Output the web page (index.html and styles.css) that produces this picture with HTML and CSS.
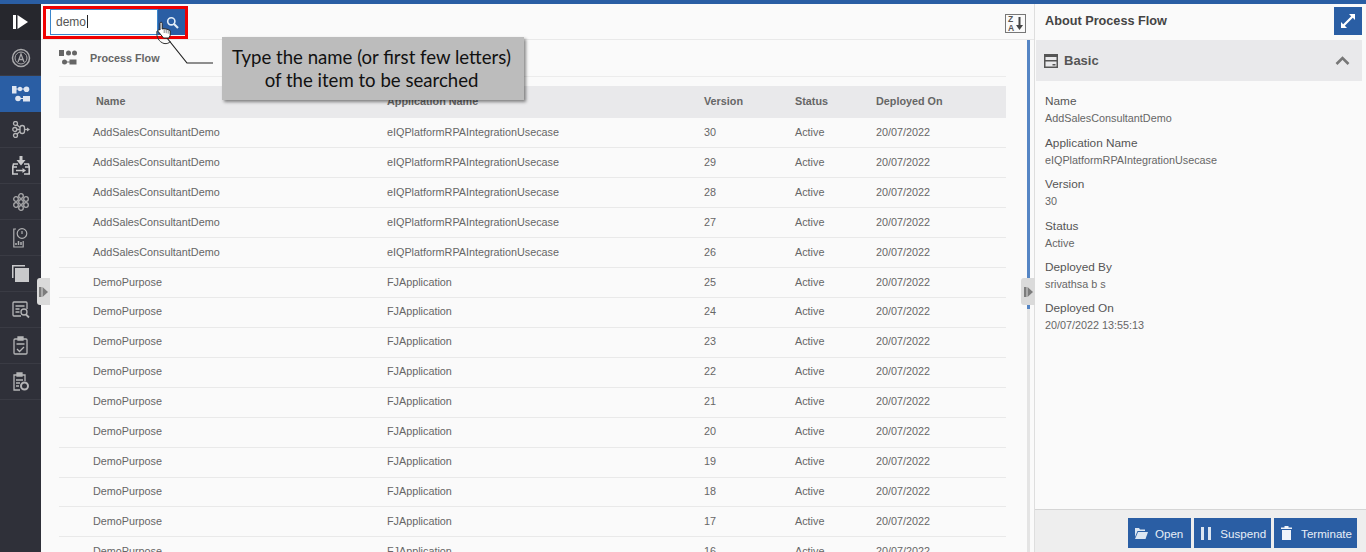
FILE: index.html
```html
<!DOCTYPE html>
<html lang="en">
<head>
    <meta charset="UTF-8">
    <title>Process Flow</title>
    <link rel="stylesheet" href="styles.css">
</head>
<body>
    <div class="top-bar"></div>
    <div class="app">
        <nav class="sidebar">
            <div class="nav-item nav-toggle">
                <svg width="15" height="14" viewBox="0 0 15 14"><rect x="0" y="0" width="3" height="14" fill="#fff"/><path d="M4.500 0L15 7 4.500 14z" fill="#fff"/></svg>
            </div>
            <div class="nav-item">
                <svg width="20" height="20" viewBox="0 0 20 20" fill="none" stroke="#a9a9ab"><circle cx="10" cy="10" r="8.500" stroke-width="1.500"/><circle cx="10" cy="10" r="6" stroke-width="1"/><path d="M7 14l3-8 3 8M8 11.500h4" stroke-width="1.300"/></svg>
            </div>
            <div class="nav-item nav-active">
                <svg width="18" height="16" viewBox="0 0 18 16" fill="#dfe6f1"><rect x="0" y="0" width="4.500" height="7.500"/><circle cx="8" cy="3" r="2.200"/><circle cx="14.500" cy="3.200" r="2.800"/><circle cx="6" cy="12.500" r="2.800"/><rect x="11" y="10" width="7" height="5.500"/><path d="M4 2.500h9v1H4zM8 12h4v1H8z"/></svg>
            </div>
            <div class="nav-item">
                <svg width="18" height="17" viewBox="0 0 18 17" fill="none" stroke="#b5b5b7" stroke-width="1.300"><circle cx="3.500" cy="2.500" r="2"/><circle cx="2.800" cy="8.500" r="2"/><circle cx="3.500" cy="14.500" r="2"/><path d="M5 4l3 2.500M5 8.500h3M5 13l3-2.500"/><rect x="8" y="4.500" width="4.500" height="8" rx="2.200"/><path d="M12.500 8.500H15"/><path d="M15 6.500l3 2-3 2z" fill="#b5b5b7" stroke="none"/></svg>
            </div>
            <div class="nav-item">
                <svg width="18" height="19" viewBox="0 0 18 19" fill="none" stroke="#c9c9cb" stroke-width="1.600"><path d="M9 0v5" stroke-width="3"/><path d="M4.500 4h9L9 9.500z" fill="#c9c9cb" stroke="none"/><path d="M6 8H1.500l-.7 2.500V18H6M12 8h4.500l.7 2.500V18H12M1 11h4M17 11h-4M4 14.500h8"/><path d="M10.500 12l3.500 2.500-3.500 2.500z" fill="#c9c9cb" stroke="none"/></svg>
            </div>
            <div class="nav-item">
                <svg width="16" height="18" viewBox="0 0 16 18" fill="none" stroke="#a9a9ab" stroke-width="1.300"><circle cx="8" cy="9" r="2.300"/><circle cx="8" cy="3" r="2.300"/><circle cx="8" cy="15" r="2.300"/><circle cx="3" cy="6" r="2.300"/><circle cx="13" cy="6" r="2.300"/><circle cx="3" cy="12" r="2.300"/><circle cx="13" cy="12" r="2.300"/></svg>
            </div>
            <div class="nav-item">
                <svg width="15" height="20" viewBox="0 0 15 20" fill="none" stroke="#b0b0b2" stroke-width="1.200"><path d="M3 1H.8v18h9.400v-6"/><circle cx="9" cy="5.500" r="4.800"/><path d="M9 3v3"/><path d="M3 17v-2M5.500 17v-4M8 17v-3" stroke-width="1.500"/></svg>
            </div>
            <div class="nav-item">
                <svg width="17" height="17" viewBox="0 0 17 17"><path d="M0 0h13v1.500H1.500V13H0z" fill="#c9c9cb"/><rect x="3" y="3" width="14" height="14" fill="#c9c9cb"/></svg>
            </div>
            <div class="nav-item">
                <svg width="18" height="18" viewBox="0 0 18 18" fill="none" stroke="#b5b5b7" stroke-width="1.300"><path d="M15 8V2a1 1 0 0 0-1-1H2a1 1 0 0 0-1 1v12a1 1 0 0 0 1 1h7"/><path d="M3.500 5h9M3.500 8h4M3.500 11h4"/><circle cx="12" cy="11" r="3"/><path d="M14 13.500l3 3" stroke-width="1.800"/></svg>
            </div>
            <div class="nav-item">
                <svg width="15" height="19" viewBox="0 0 15 19" fill="none" stroke="#b5b5b7" stroke-width="1.300"><rect x="1" y="3" width="13" height="15" rx="1"/><path d="M5 1h5v3H5z" fill="#b5b5b7"/><path d="M3.500 8h8M4 13l2.500 2.500L11 11"/></svg>
            </div>
            <div class="nav-item">
                <svg width="16" height="19" viewBox="0 0 16 19" fill="none" stroke="#b5b5b7" stroke-width="1.300"><path d="M7 18H1V3h11v6"/><path d="M4 1h5v3H4z" fill="#b5b5b7"/><path d="M3 8h7M3 11h4M3 14h3"/><circle cx="11.500" cy="14" r="3.500" stroke-width="2"/></svg>
            </div>
        </nav>

        <main class="content">
            <div class="search-row">
                <div class="search-box">
                    <span class="search-input">demo<span class="caret"></span></span>
                    <span class="search-btn">
                        <svg width="13" height="13" viewBox="0 0 13 13" fill="none" stroke="#e3edf8"><circle cx="5.300" cy="5.300" r="3.600" stroke-width="1.600"/><path d="M8 8l4 4" stroke-width="2.200"/></svg>
                    </span>
                </div>
                <svg class="sort-icon" width="21" height="19" viewBox="0 0 21 19"><rect x=".5" y=".5" width="20" height="18" fill="none" stroke="#777"/><text x="3" y="8" class="sort-letter">Z</text><text x="3" y="17" class="sort-letter">A</text><path d="M14.500 3v10" stroke="#444" stroke-width="2"/><path d="M11 11h7l-3.500 5z" fill="#444"/></svg>
            </div>
            <div class="content-body">
                <div class="list-pane">
                    <div class="list-title">
                        <svg width="19" height="16" viewBox="0 0 19 16" fill="#666"><rect x="0" y="0" width="5" height="6"/><circle cx="9.500" cy="3" r="2.500"/><circle cx="15.500" cy="3" r="2.500"/><circle cx="5.500" cy="12" r="2.500"/><rect x="10.500" y="9.500" width="7" height="5"/><path d="M7 11.500h4v1H7z"/></svg>
                        <span>Process Flow</span>
                    </div>
                    <table class="flow-table">
                        <thead>
                            <tr><th>Name</th><th>Application Name</th><th>Version</th><th>Status</th><th>Deployed On</th></tr>
                        </thead>
                        <tbody>
                            <tr><td>AddSalesConsultantDemo</td><td>eIQPlatformRPAIntegrationUsecase</td><td>30</td><td>Active</td><td>20/07/2022</td></tr>
                            <tr><td>AddSalesConsultantDemo</td><td>eIQPlatformRPAIntegrationUsecase</td><td>29</td><td>Active</td><td>20/07/2022</td></tr>
                            <tr><td>AddSalesConsultantDemo</td><td>eIQPlatformRPAIntegrationUsecase</td><td>28</td><td>Active</td><td>20/07/2022</td></tr>
                            <tr><td>AddSalesConsultantDemo</td><td>eIQPlatformRPAIntegrationUsecase</td><td>27</td><td>Active</td><td>20/07/2022</td></tr>
                            <tr><td>AddSalesConsultantDemo</td><td>eIQPlatformRPAIntegrationUsecase</td><td>26</td><td>Active</td><td>20/07/2022</td></tr>
                            <tr><td>DemoPurpose</td><td>FJApplication</td><td>25</td><td>Active</td><td>20/07/2022</td></tr>
                            <tr><td>DemoPurpose</td><td>FJApplication</td><td>24</td><td>Active</td><td>20/07/2022</td></tr>
                            <tr><td>DemoPurpose</td><td>FJApplication</td><td>23</td><td>Active</td><td>20/07/2022</td></tr>
                            <tr><td>DemoPurpose</td><td>FJApplication</td><td>22</td><td>Active</td><td>20/07/2022</td></tr>
                            <tr><td>DemoPurpose</td><td>FJApplication</td><td>21</td><td>Active</td><td>20/07/2022</td></tr>
                            <tr><td>DemoPurpose</td><td>FJApplication</td><td>20</td><td>Active</td><td>20/07/2022</td></tr>
                            <tr><td>DemoPurpose</td><td>FJApplication</td><td>19</td><td>Active</td><td>20/07/2022</td></tr>
                            <tr><td>DemoPurpose</td><td>FJApplication</td><td>18</td><td>Active</td><td>20/07/2022</td></tr>
                            <tr><td>DemoPurpose</td><td>FJApplication</td><td>17</td><td>Active</td><td>20/07/2022</td></tr>
                            <tr><td>DemoPurpose</td><td>FJApplication</td><td>16</td><td>Active</td><td>20/07/2022</td></tr>
                        </tbody>
                    </table>
                </div>
                <div class="scroll-track"><div class="scroll-thumb"></div></div>
            </div>
        </main>

        <aside class="about">
            <div class="about-head">
                <span>About Process Flow</span>
                <span class="expand-btn">
                    <svg width="14" height="14" viewBox="0 0 14 14" fill="#fff"><path d="M8 0h6v6l-2.200-2.200L3.800 11.800 6 14H0V8l2.200 2.200L10.200 2.200z"/></svg>
                </span>
            </div>
            <div class="basic-head">
                <svg width="14" height="14" viewBox="0 0 14 14" fill="#555"><path d="M0 0h14v14H0zM1.500 3v3h11V3zM1.500 7.500v5h11v-5zM8.500 10h3v1.500h-3z" fill-rule="evenodd"/></svg>
                <span class="basic-title">Basic</span>
                <svg class="chevron" width="15" height="9" viewBox="0 0 15 9" fill="none" stroke="#777" stroke-width="2.600"><path d="M1.500 8L7.500 2l6 6"/></svg>
            </div>
            <dl class="details">
                <dt>Name</dt><dd>AddSalesConsultantDemo</dd>
                <dt>Application Name</dt><dd>eIQPlatformRPAIntegrationUsecase</dd>
                <dt>Version</dt><dd>30</dd>
                <dt>Status</dt><dd>Active</dd>
                <dt>Deployed By</dt><dd>srivathsa b s</dd>
                <dt>Deployed On</dt><dd>20/07/2022 13:55:13</dd>
            </dl>
            <div class="about-foot">
                <button class="action-btn action-open">
                    <svg width="13" height="11" viewBox="0 0 13 11" fill="#dce6f2"><path d="M0 0h4l1 1.500h5V3H2.500L0 9z"/><path d="M3 4h10l-2.500 7H0z"/></svg>Open
                </button>
                <button class="action-btn action-wide">
                    <svg width="10" height="13" viewBox="0 0 10 13" fill="#dce6f2"><rect width="3" height="13"/><rect x="7" width="3" height="13"/></svg>Suspend
                </button>
                <button class="action-btn action-wide">
                    <svg width="11" height="14" viewBox="0 0 11 14" fill="#f0f4fa"><path d="M0 1.500h3.500V0h4v1.500H11V3H0zM1 4h9v10H1z"/></svg>Terminate
                </button>
            </div>
        </aside>
    </div>

    <!-- tutorial overlay -->
    <div class="highlight-box"></div>
    <svg class="leader" width="50" height="30" viewBox="0 0 50 30" fill="none"><path d="M1 1l20 25h26" stroke="#222" stroke-width="1.200"/></svg>
    <svg class="cursor" width="20" height="26" viewBox="0 0 20 26" fill="none"><path d="M2 11c-1 6 2 11 7 12.500 3 .5 5-.5 6.500-2" stroke="#333"/><path d="M5 3.500c0-1.800 2.200-1.800 2.200 0V9l2-.5 2 .6 2 .4 2 1.200v4.800L13.800 18H8.500L3.200 11.500c-.7-1.500.8-2.500 1.800-1.500z" fill="#fff" stroke="#222"/><path d="M9.200 9v4M11.200 9.200v4M13.200 9.600v4" stroke="#555" stroke-width=".7"/></svg>
    <div class="callout">Type the name (or first few letters)<br>of the item to be searched</div>
    <div class="handle handle-left">
        <svg width="9" height="10" viewBox="0 0 9 10" fill="#7c7c7c"><rect width="2.500" height="10"/><path d="M3.500 0L9 5l-5.500 5z"/></svg>
    </div>
    <div class="handle handle-right">
        <svg width="9" height="10" viewBox="0 0 9 10" fill="#7c7c7c"><rect width="2.500" height="10"/><path d="M3.500 0L9 5l-5.500 5z"/></svg>
    </div>
</body>
</html>
```

FILE: styles.css
```css
/* Basic Styles */
* {
    box-sizing: border-box;
}

html,
body {
    margin: 0;
    height: 552px;
    overflow: hidden;
}

body {
    font-family: "Liberation Sans", Arial, sans-serif;
    font-size: 12px;
    color: #666;
    background-color: #fff;
    display: flex;
    flex-direction: column;
}

.top-bar {
    height: 4px;
    flex: none;
    background-color: #2a5ea4;
}

.app {
    flex: 1;
    display: flex;
    min-height: 0;
}

/* Sidebar */
.sidebar {
    width: 41px;
    flex: none;
    background-color: #2f3039;
}

.nav-item {
    height: 36px;
    display: flex;
    align-items: center;
    justify-content: center;
    border-bottom: 1px solid #3a3b44;
}

.nav-toggle {
    background-color: #26272d;
    border-bottom: none;
}

.nav-active {
    background-color: #2a5ea4;
    border-bottom: none;
}

/* Main content */
.content {
    flex: 1;
    min-width: 0;
    display: flex;
    flex-direction: column;
    background-color: #fafafa;
}

.search-row {
    height: 36px;
    flex: none;
    display: flex;
    align-items: flex-start;
    justify-content: space-between;
    padding: 5px 8px 0 9px;
    border-bottom: 1px solid #e9e9e9;
    background-color: #fafafa;
}

.search-box {
    display: flex;
    height: 26px;
}

.search-input {
    width: 108px;
    padding: 0 5px;
    line-height: 24px;
    font-size: 12px;
    color: #555;
    background-color: #fff;
    border: 1px solid #3a86cc;
}

.caret {
    display: inline-block;
    width: 1px;
    height: 13px;
    margin-left: 1px;
    vertical-align: -2px;
    background-color: #222;
}

.search-btn {
    width: 28px;
    display: flex;
    align-items: center;
    justify-content: center;
    background-color: #2a5ea4;
}

.sort-icon {
    margin-top: 5px;
}

.sort-letter {
    font-family: "Liberation Sans", Arial, sans-serif;
    font-size: 8.500px;
    font-weight: bold;
    fill: #555;
}

.content-body {
    flex: 1;
    min-height: 0;
    display: flex;
    padding-left: 18px;
}

.list-pane {
    width: 947px;
    flex: none;
    overflow: hidden;
}

.list-title {
    height: 37px;
    display: flex;
    align-items: center;
    gap: 12px;
    font-size: 10.800px;
    font-weight: bold;
    color: #666;
    border-bottom: 1px solid #ececec;
}

.flow-table {
    width: 947px;
    margin-top: 9px;
    table-layout: fixed;
    border-collapse: collapse;
}

.flow-table th:nth-child(1),
.flow-table td:nth-child(1) {
    width: 328px;
}

.flow-table th:nth-child(2),
.flow-table td:nth-child(2) {
    width: 317px;
}

.flow-table th:nth-child(3),
.flow-table td:nth-child(3) {
    width: 91px;
}

.flow-table th:nth-child(4),
.flow-table td:nth-child(4) {
    width: 81px;
}

.flow-table th {
    height: 32px;
    padding: 0 0 2px;
    font-size: 10.800px;
    font-weight: bold;
    text-align: left;
    color: #666;
    background-color: #e9e9eb;
}

.flow-table th:first-child {
    padding-left: 37px;
}

.flow-table td {
    height: 29.930px;
    padding: 0 0 2px;
    font-size: 10.800px;
    color: #666;
    border-bottom: 1px solid #e9e9e9;
}

.flow-table td:first-child {
    padding-left: 34px;
}

.scroll-track {
    width: 3px;
    margin-left: 21px;
    background-color: #e4e4e4;
}

.scroll-thumb {
    height: 269px;
    background-color: #5585c4;
}

/* About panel */
.about {
    width: 332px;
    flex: none;
    display: flex;
    flex-direction: column;
    border-left: 1px solid #dedede;
    background-color: #fafafa;
}

.about-head {
    height: 36px;
    flex: none;
    display: flex;
    align-items: center;
    justify-content: space-between;
    padding: 0 4px 2px 10px;
    font-size: 12.700px;
    font-weight: bold;
    color: #444;
}

.expand-btn {
    width: 28px;
    height: 28px;
    display: flex;
    align-items: center;
    justify-content: center;
    background-color: #2a5ea4;
}

.basic-head {
    height: 41px;
    flex: none;
    margin: 0 4px 0 1px;
    padding: 0 12px 0 8px;
    display: flex;
    align-items: center;
    gap: 6px;
    background-color: #e9e9eb;
}

.basic-title {
    flex: 1;
    font-size: 13px;
    font-weight: bold;
    color: #555;
}

.details {
    flex: 1;
    margin: 0;
    padding: 13.400px 10px 0;
}

.details dt {
    font-size: 11.800px;
    line-height: 14px;
    color: #555;
}

.details dd {
    margin: 3px 0 10.400px;
    font-size: 10.800px;
    line-height: 14px;
    color: #666;
}

.about-foot {
    height: 43px;
    flex: none;
    display: flex;
    justify-content: flex-end;
    gap: 3px;
    padding: 8px 9px 5px 0;
    background-color: #eee;
    border-top: 1px solid #d5d5d5;
}

.action-btn {
    display: flex;
    align-items: center;
    gap: 7px;
    height: 30px;
    padding: 0 5px 0 7px;
    font-family: inherit;
    font-size: 11.600px;
    color: #e8eef7;
    background-color: #2a5ea4;
    border: none;
}

.action-open {
    padding-right: 8px;
}

.action-wide {
    gap: 9px;
}

/* Overlay */
.highlight-box {
    position: absolute;
    left: 43px;
    top: 6px;
    width: 145px;
    height: 33px;
    border: 3px solid #f00000;
}

.leader {
    position: absolute;
    left: 166px;
    top: 37px;
}

.cursor {
    position: absolute;
    left: 155px;
    top: 20px;
}

.callout {
    position: absolute;
    left: 222px;
    top: 37px;
    width: 302px;
    height: 63px;
    padding: 9px 3px 0 0;
    text-align: center;
    font-family: Lato, sans-serif;
    font-size: 18.600px;
    line-height: 23px;
    color: #111;
    background-color: #bcbcbc;
    box-shadow: 2px 2px 3px rgba(0, 0, 0, 0.45);
}

.handle {
    position: absolute;
    top: 278px;
    display: flex;
    align-items: center;
    justify-content: center;
    width: 13px;
    height: 27px;
    background-color: #dadada;
    border-radius: 3px 0 0 3px;
}

.handle-left {
    left: 37px;
}

.handle-right {
    left: 1021px;
    width: 14px;
}
```
